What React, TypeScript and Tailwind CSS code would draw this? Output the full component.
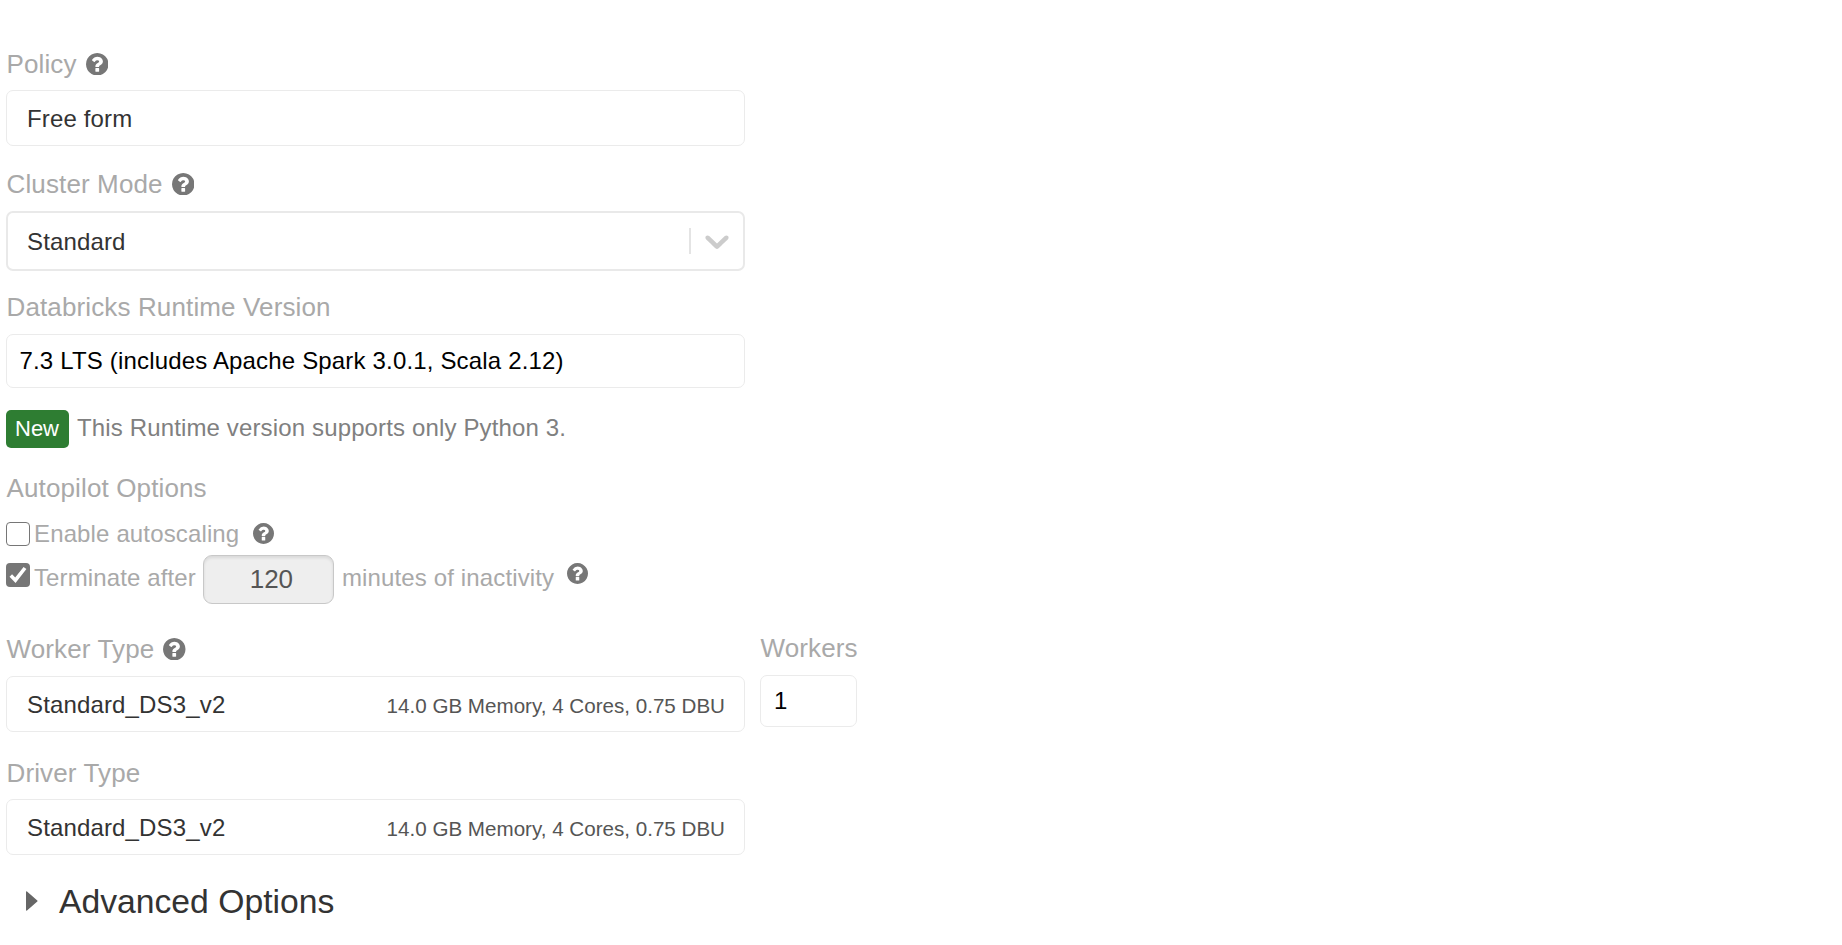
import React from "react";

function HelpIcon({ className }: { className: string }) {
  return (
    <svg viewBox="128 128 1536 1536" className={`shrink-0 fill-[#777777] ${className}`} aria-hidden="true">
      <path d="M1024 1376v-192q0-14-9-23t-23-9h-192q-14 0-23 9t-9 23v192q0 14 9 23t23 9h192q14 0 23-9t9-23zM1280 704q0-88-55.5-163t-138.5-116-170-41q-243 0-371 213-15 24 8 42l132 100q7 6 19 6 16 0 25-12 53-68 86-92 34-24 86-24 48 0 85.5 26t37.5 59q0 38-20 61t-68 45q-63 28-115.5 86.5t-52.5 125.5v36q0 14 9 23t23 9h192q14 0 23-9t9-23q0-19 21.5-49.5t54.5-49.5q32-18 49-28.5t46-35 44.5-48 28-60.5 12.5-81zM1664 896q0 209-103 385.5t-279.5 279.5-385.5 103-385.5-103-279.5-279.5-103-385.5 103-385.5 279.5-279.5 385.5-103 385.5 103 279.5 279.5 103 385.5z" />
    </svg>
  );
}

function Label({ text, help, className = "" }: { text: string; help?: boolean; className?: string }) {
  return (
    <div className={`flex h-8 items-start pl-[0.5px] ${className}`}>
      <span className="whitespace-nowrap text-[26px] leading-8 tracking-[0.13px] text-[#a9a9a9]">{text}</span>
      {help && <HelpIcon className="ml-[9px] mt-[4.5px] size-[22.5px]" />}
    </div>
  );
}

function NodeType({ className = "" }: { className?: string }) {
  return (
    <div className={`flex h-14 w-[739px] items-center justify-between rounded-[7px] border border-[#ebebeb] pl-5 pr-[19px] ${className}`}>
      <span className="pt-px text-[24px] leading-8 tracking-[0.15px] text-[#333333]">Standard_DS3_v2</span>
      <span className="pt-[3px] text-[20.6px] leading-8 text-[#555555]">14.0 GB Memory, 4 Cores, 0.75 DBU</span>
    </div>
  );
}

export default function App() {
  return (
    <main className="flex h-[945px] w-[1842px] flex-col overflow-hidden bg-white pl-1.5 pt-12 font-['Liberation_Sans',Arial,sans-serif]">
      <Label text="Policy" help />
      <div className="mt-2.5 flex h-14 w-[739px] shrink-0 items-center rounded-[7px] border border-[#ebebeb] pl-5">
        <span className="pt-0.5 text-[24px] leading-8 tracking-[0.15px] text-[#333333]">Free form</span>
      </div>

      <Label text="Cluster Mode" help className="mt-[22px]" />
      <div className="mt-[11px] flex h-[60px] w-[739px] shrink-0 items-center rounded-[7px] border-2 border-[#e9e9e9] pl-[19px] pr-1.5">
        <span className="grow pt-px text-[24px] leading-8 tracking-[0.15px] text-[#333333]">Standard</span>
        <span className="h-[26px] w-0.5 bg-[#e4e4e4]" />
        <svg viewBox="0 0 20 20" className="ml-1.5 size-10 fill-[#cccccc]" aria-hidden="true">
          <path d="M4.516 7.548c0.436-0.446 1.043-0.481 1.576 0l3.908 3.747 3.908-3.747c0.533-0.481 1.141-0.446 1.574 0 0.436 0.445 0.408 1.197 0 1.615-0.406 0.418-4.695 4.502-4.695 4.502-0.217 0.223-0.502 0.335-0.787 0.335s-0.57-0.112-0.789-0.335c0 0-4.287-4.084-4.695-4.502s-0.436-1.17 0-1.615z" />
        </svg>
      </div>

      <Label text="Databricks Runtime Version" className="mt-5" />
      <div className="mt-[11px] flex h-[54px] w-[739px] shrink-0 items-center rounded-[7px] border border-[#ebebeb] pl-[12.5px]">
        <span className="text-[24px] leading-8 tracking-[0.17px] text-black">7.3 LTS (includes Apache Spark 3.0.1, Scala 2.12)</span>
      </div>

      <div className="mt-[22px] flex h-[38px] shrink-0 items-start">
        <span className="h-[38px] w-[63px] rounded-[5px] bg-[#2e7d32] pl-[9px] pt-px text-[22px] leading-9 text-white">New</span>
        <span className="ml-2 mt-0.5 text-[24px] leading-8 tracking-[0.14px] text-[#808080]">This Runtime version supports only Python 3.</span>
      </div>

      <Label text="Autopilot Options" className="mt-6" />
      <div className="mt-[14px] flex h-8 shrink-0 items-start">
        <span className="mt-1 size-6 shrink-0 rounded-[4px] border border-[#767676] bg-white" />
        <span className="ml-1 text-[24px] leading-8 tracking-[0.14px] text-[#a9a9a9]">Enable autoscaling</span>
        <HelpIcon className="ml-[14px] mt-[5px] size-[21px]" />
      </div>
      <div className="mt-[5px] flex h-[49px] shrink-0 items-start">
        <span className="mt-2 size-6 shrink-0 rounded-[4px] bg-[#767676]">
          <svg viewBox="0 0 24 24" className="size-6 fill-none stroke-white stroke-[3.6]" aria-hidden="true">
            <path d="M4.8 12.6 9.4 17.2 19 5" />
          </svg>
        </span>
        <span className="ml-1 mt-[7px] text-[24px] leading-8 tracking-[0.12px] text-[#a9a9a9]">Terminate after</span>
        <span className="ml-[7px] h-[49px] w-[131px] shrink-0 rounded-[9px] border border-[#c8c8c8] bg-[#eeeeee] pl-1.5 text-center text-[26px] leading-[46px] text-[#555555] shadow-[inset_0_2px_3px_rgba(0,0,0,0.09)]">120</span>
        <span className="ml-2 mt-[7px] text-[24px] leading-8 tracking-[0.14px] text-[#a9a9a9]">minutes of inactivity</span>
        <HelpIcon className="ml-[13px] mt-2 size-[21px]" />
      </div>

      <div className="mt-7 flex h-[100px] shrink-0 items-start">
        <div className="mt-px flex w-[754px] flex-col">
          <Label text="Worker Type" help />
          <NodeType className="mt-[11px]" />
        </div>
        <div className="flex flex-col">
          <Label text="Workers" />
          <div className="mt-[11px] flex h-[52px] w-[97px] items-center rounded-[7px] border border-[#ebebeb] pl-[13px]">
            <span className="text-[24px] leading-8 text-black">1</span>
          </div>
        </div>
      </div>

      <Label text="Driver Type" className="mt-[25px]" />
      <NodeType className="mt-2.5 shrink-0" />

      <div className="mt-[26px] flex h-10 shrink-0 items-center pl-5">
        <svg viewBox="0 0 12 20" className="h-5 w-3 fill-[#666666]" aria-hidden="true">
          <path d="M0 1Q0 0 1 .5L11.3 9.4Q12 10 11.3 10.6L1 19.5Q0 20 0 19Z" />
        </svg>
        <span className="ml-[21px] whitespace-nowrap text-[33.7px] leading-10 text-[#333333]">Advanced Options</span>
      </div>
    </main>
  );
}
